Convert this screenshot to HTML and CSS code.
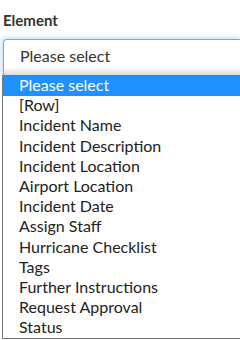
FILE: index.html
```html
<!DOCTYPE html>
<html lang="en">
<head>
    <meta charset="UTF-8">
    <title>Element select</title>
    <link rel="stylesheet" href="styles.css">
</head>
<body>
    <label class="field-label">Element</label>
    <div class="select-box">Please select</div>
    <ul class="option-list">
        <li class="option selected">Please select</li>
        <li class="option">[Row]</li>
        <li class="option">Incident Name</li>
        <li class="option">Incident Description</li>
        <li class="option">Incident Location</li>
        <li class="option">Airport Location</li>
        <li class="option">Incident Date</li>
        <li class="option">Assign Staff</li>
        <li class="option">Hurricane Checklist</li>
        <li class="option">Tags</li>
        <li class="option">Further Instructions</li>
        <li class="option">Request Approval</li>
        <li class="option">Status</li>
    </ul>
</body>
</html>
```

FILE: styles.css
```css
body {
    margin: 0;
    padding: 0 0 0 3px;
    font-family: Lato, "Liberation Sans", sans-serif;
    color: #333;
    background: white;
}
.field-label {
    display: block;
    margin-top: 11px;
    font-size: 15px;
    line-height: 18px;
    font-weight: bold;
}
.select-box {
    margin-top: 10px;
    height: 36px;
    box-sizing: border-box;
    padding: 6px 16px;
    font-size: 16px;
    line-height: 20px;
    border: 1px solid #66afe9;
    border-right: 0;
    border-bottom: 0;
    border-radius: 4px 0 0 0;
    box-shadow: -1px -1px 5px rgba(102, 175, 233, 0.5);
    background: linear-gradient(to bottom, white 78%, #dcdcdc 100%);
}
.option-list {
    margin: 0 0 0 -1px;
    padding: 0;
    list-style: none;
    background: white;
    border: 1px solid #767676;
    border-right: 0;
    font-size: 16px;
    color: #222;
}
.option {
    height: 20.2px;
    line-height: 17px;
    padding-left: 16px;
}
.option.selected {
    background: #1e90ff;
    color: white;
}
```
